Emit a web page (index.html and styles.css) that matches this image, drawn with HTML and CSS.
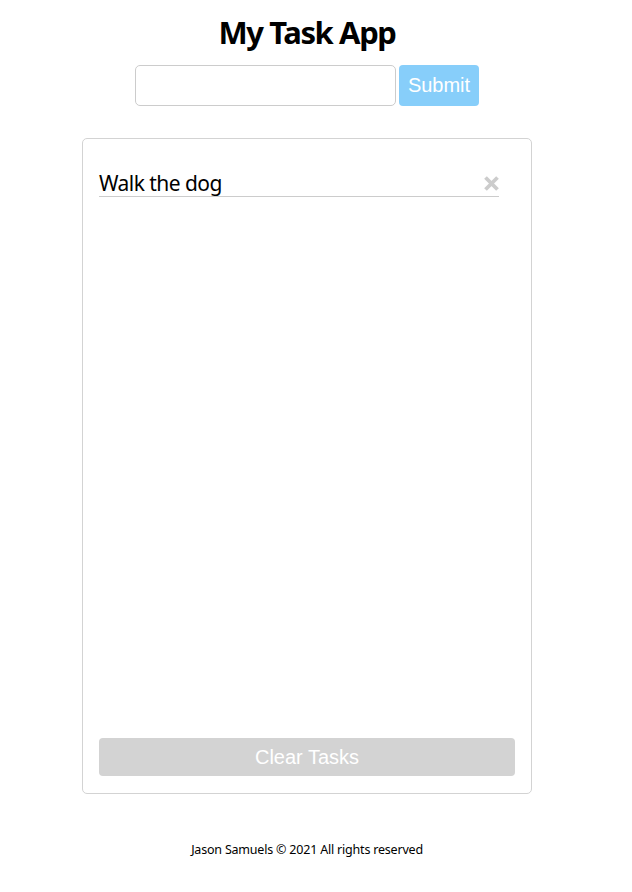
FILE: index.html
```html
<!DOCTYPE html>
<html>
<head>
<meta charset="utf-8">
<link rel="stylesheet" href="styles.css">
</head>
<body>
<div class="page">
  <h1 class="title">My Task App</h1>
  <form class="add-form">
    <input class="task-input" type="text">
    <button class="submit-btn" type="button">Submit</button>
  </form>
  <div class="card">
    <ul class="task-list">
      <li class="task">
        <span class="task-text">Walk the dog</span>
        <svg class="task-remove" width="15" height="15" viewBox="0 0 15 15"><path d="M1.5 1.5 L13.5 13.5 M13.5 1.5 L1.5 13.5" stroke="#cccccc" stroke-width="3.8" stroke-linecap="butt" fill="none"/></svg>
      </li>
    </ul>
    <button class="clear-btn" type="button">Clear Tasks</button>
  </div>
  <footer class="footer">Jason Samuels © 2021 All rights reserved</footer>
</div>
</body>
</html>
```
FILE: styles.css
```css
* { box-sizing: border-box; }
html, body { margin: 0; padding: 0; background: #fff; }
body { font-family: "Noto Sans", "Open Sans", sans-serif; color: #000; }
.page {
  width: 614px;
  display: flex;
  flex-direction: column;
  align-items: center;
}
.title {
  margin: 10px 0 0;
  font-size: 31px;
  line-height: 44px;
  font-weight: 700;
  letter-spacing: -1.4px;
}
.add-form {
  margin-top: 11px;
  display: flex;
  gap: 3px;
}
.task-input {
  width: 261px;
  height: 41px;
  border: 1px solid #ccc;
  border-radius: 5px;
  padding: 0 8px;
  font-size: 18px;
}
.submit-btn {
  width: 80px;
  height: 41px;
  border: none;
  border-radius: 4px;
  background: #87cefa;
  color: #fff;
  font-family: "Liberation Sans", Arial, sans-serif;
  font-size: 20px;
  padding: 0;
}
.card {
  margin-top: 32px;
  width: 450px;
  height: 656px;
  border: 1px solid #d3d3d3;
  border-radius: 5px;
  padding: 16px 16px 17px;
  display: flex;
  flex-direction: column;
}
.task-list {
  list-style: none;
  margin: 0;
  padding: 0;
  flex: 1;
}
.task {
  margin-top: 15px;
  width: 400px;
  display: flex;
  justify-content: space-between;
  align-items: center;
  border-bottom: 1px solid #ccc;
  height: 27px;
}
.task-text {
  font-size: 21px;
  letter-spacing: -0.55px;
  line-height: 27px;
}
.task-remove {
  display: block;
}
.clear-btn {
  width: 416px;
  height: 38px;
  border: none;
  border-radius: 4px;
  background: #d3d3d3;
  color: #fff;
  font-family: "Liberation Sans", Arial, sans-serif;
  font-size: 20px;
  padding: 0;
}
.footer {
  margin-top: 47px;
  font-size: 12.5px;
  letter-spacing: -0.2px;
}
```
